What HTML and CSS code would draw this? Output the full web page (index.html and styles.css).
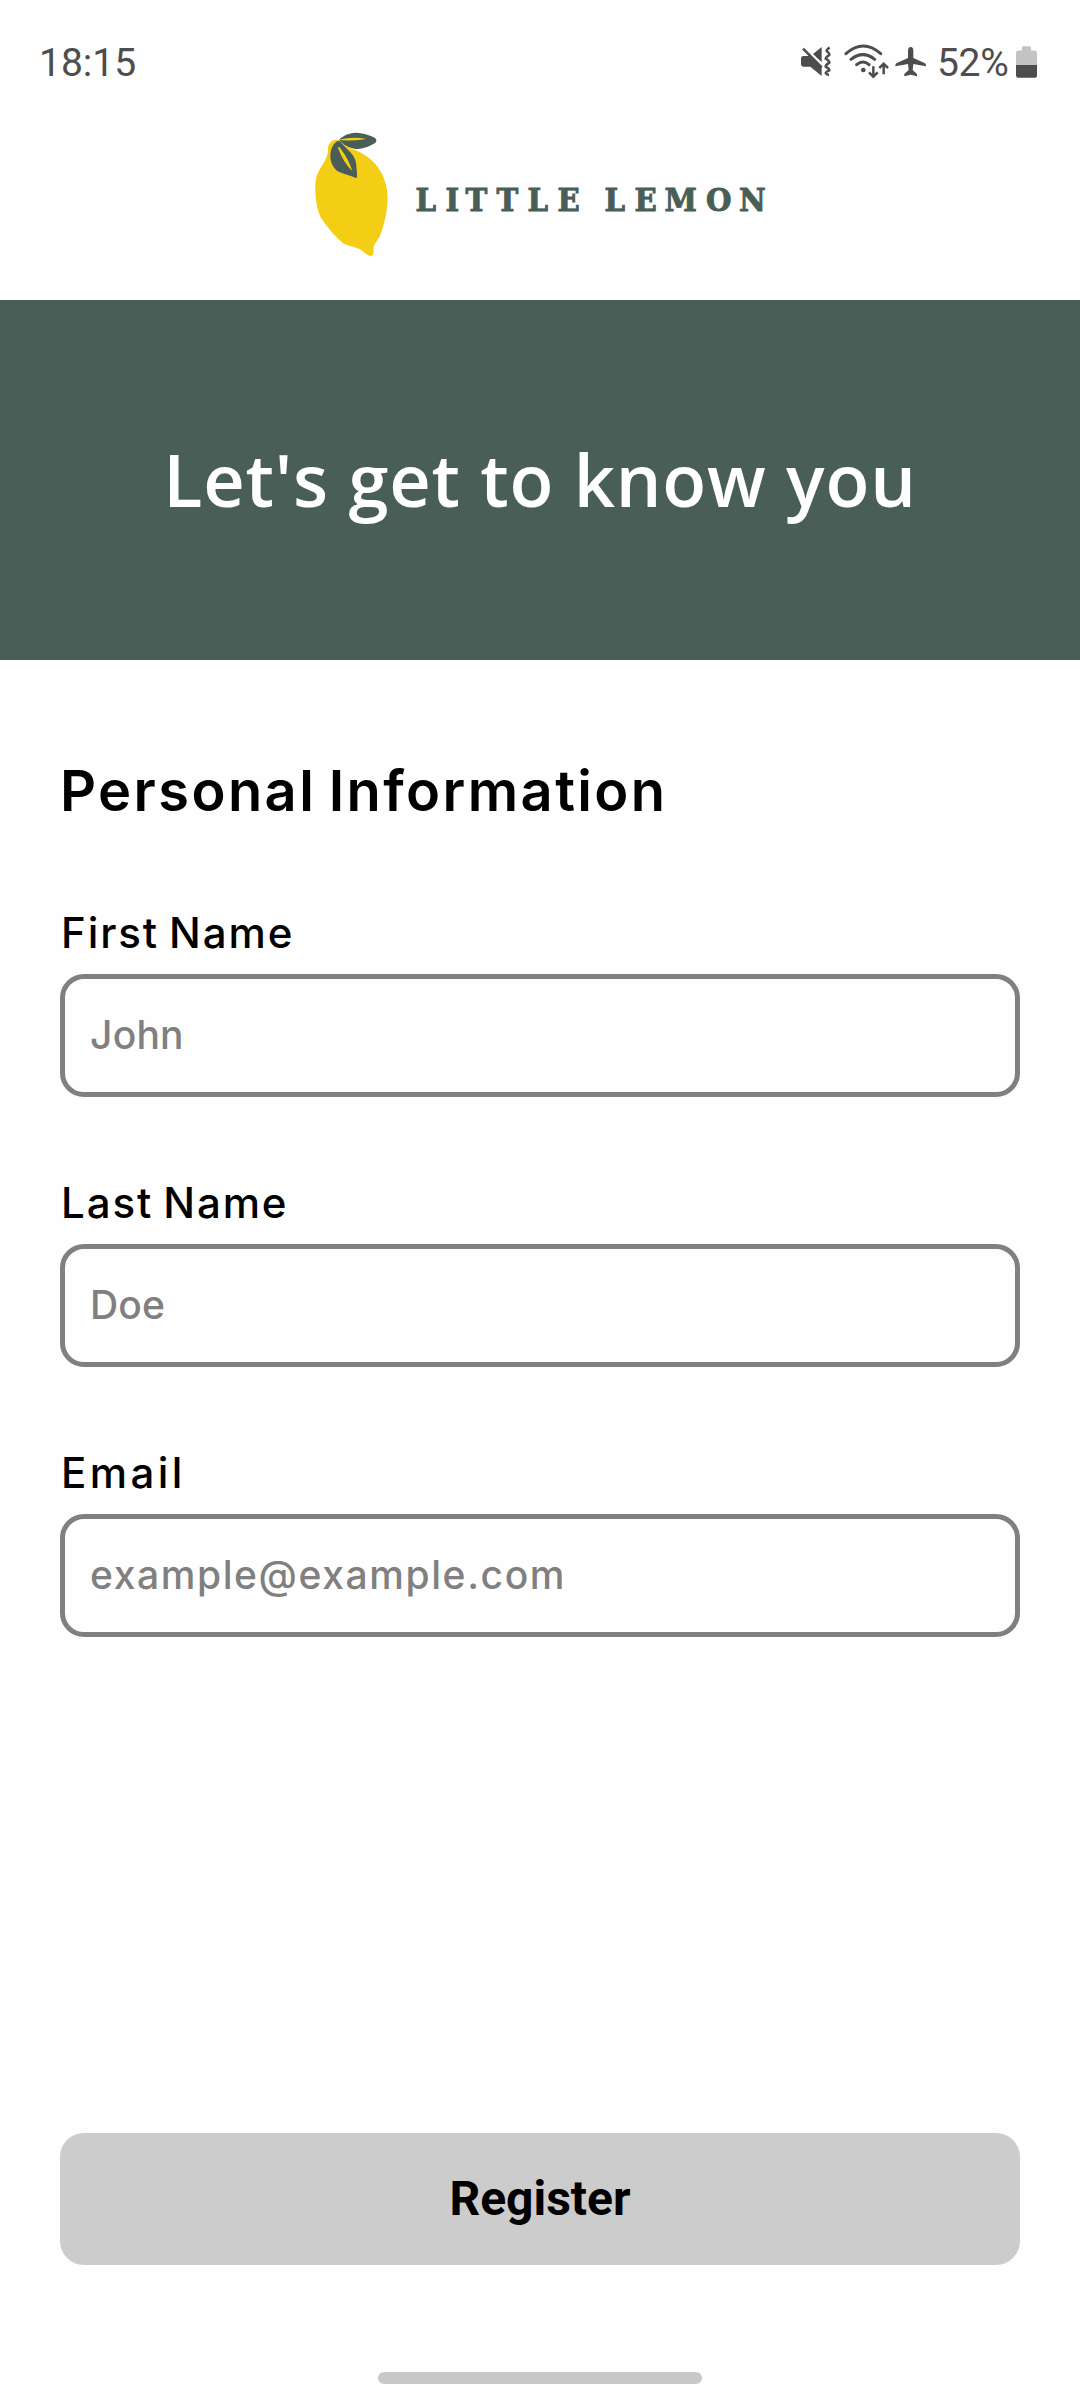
FILE: index.html
```html
<!DOCTYPE html>
<html lang="en">
<head>
<meta charset="utf-8">
<title>Little Lemon</title>
<link rel="stylesheet" href="styles.css">
</head>
<body>
<div class="screen">
  <div class="status">
    <span class="time">18:15</span>
    <div class="indicators">
      <svg class="system-icons" viewBox="60 40 384 108" fill="none" stroke="#4d4d4d">
        <g fill="#4d4d4d" stroke="none">
          <path d="M63 86q0-7 7-7h19l36 33v27l-34-28H70q-7 0-7-7z"/>
          <path d="M99 73l26-21v46z"/>
          <path d="M384 64q0-12 8-12t8 12v21l35 16q3 2 3 9l-38-7-2 18 13 12v7l-19-5-19 5v-7l13-12-2-18-38 7q0-7 3-9l35-16z"/>
          <circle cx="250" cy="121" r="7"/>
        </g>
        <path stroke-width="8" d="M69 57l56 56"/>
        <path stroke-width="7.5" d="M149 54q-10 6-9 10 9 7 8 12-11 7-11 11 11 6 11 12-11 7-11 12 11 6 11 11-11 5-11 8 2 5 10 6"/>
        <path stroke-width="9" stroke-linecap="round" d="M198 72Q250 26 302 72M213 89q36-28 71 0M230 105q19-16 37 0"/>
        <g stroke-width="7.5"><path d="M280 110v32M267 128l13 13 13-13M311 134v-32M298 115l13-13 13 13"/></g>
      </svg>
      <span class="percent">52%</span>
      <svg class="battery" viewBox="0 0 64 96">
        <path fill="#c3c3c3" d="M18 5q0-5 5-5h18q5 0 5 5v8h10q8 0 8 8v36H0V21q0-8 8-8h10z"/>
        <path fill="#4d4d4d" d="M0 57h64v31q0 8-8 8H8q-8 0-8-8z"/>
      </svg>
    </div>
  </div>
  <div class="brand">
    <svg class="logo" viewBox="0 0 480 160">
      <g transform="scale(.333333)">
        <path fill="#f4ce14" d="M150 91C132 85 116 96 114 114 116 140 101 157 90 177 78 196 75 215 76 240 77 276 82 300 92 321 108 348 132 376 161 401 177 409 195 409 210 418 222 425 232 438 243 438 250 437 251 429 250 417 251 402 266 390 274 367 284 335 291 310 293 268 292 221 281 194 258 164 236 141 214 126 182 115z"/>
        <g fill="#495e57">
          <path d="M147 89C162 75 179 69 197 68 225 70 243 77 254 83 261 88 261 95 254 100 241 109 222 115 205 117 180 117 160 104 147 89z"/>
          <path d="M142 93C126 104 121 121 121 140 122 161 132 177 146 185 163 193 183 196 200 205 203 190 199 181 199 165 198 135 171 120 150 94z"/>
        </g>
        <g fill="#f4ce14"><path d="M146 89Q190 79 229 87 190 93 154 91z"/><path d="M143 111Q150 109 155 121 175 147 187 183 161 160 143 111z"/></g>
      </g>
      <text class="wordmark" y="100.5" x="125.5 155.5 175.5 206.5 237.5 267.5 298 314.5 344.5 374.5 416 449">LITTLE LEMON</text>
    </svg>
  </div>
  <header class="hero"><h1>Let's get to know you</h1></header>
  <form class="form">
    <h2>Personal Information</h2>
    <label class="field"><span>First Name</span><input placeholder="John"></label>
    <label class="field"><span>Last Name</span><input placeholder="Doe"></label>
    <label class="field"><span class="wide">Email</span><input class="email" placeholder="example@example.com"></label>
    <button type="button">Register</button>
  </form>
  <div class="home-area"><div class="home-bar"></div></div>
</div>
</body>
</html>
```
FILE: styles.css
```css
* { box-sizing: border-box; }
body { margin: 0; background: #fefefe; font-family: Inter, sans-serif; color: #000; }
.screen { width: 1080px; height: 2400px; display: flex; flex-direction: column; overflow: hidden; }
.status { height: 110px; padding: 15px 43px 0 39px; display: flex; justify-content: space-between; align-items: flex-start; font: 400 39px/96px Roboto, sans-serif; color: #4d4d4d; }
.indicators { display: flex; }
.system-icons { width: 128px; height: 36px; margin: 28px 9px 0 0; }
.percent { width: 79px; letter-spacing: -.3px; }
.battery { width: 21px; height: 32px; margin-top: 31px; }
.brand { height: 190px; padding-left: 290px; }
.logo { display: block; width: 480px; height: 160px; }
.wordmark { font: bold 32.5px "DejaVu Serif Condensed", "DejaVu Serif", serif; font-stretch: condensed; fill: #495e57; stroke: #495e57; stroke-width: .9px; }
.hero { height: 360px; background: #495e57; display: flex; align-items: center; justify-content: center; }
h1 { margin: 0; padding-bottom: 2px; color: #fff; font: 600 72px/90px "Open Sans", sans-serif; letter-spacing: .8px; white-space: nowrap; }
.form { height: 1605px; padding: 100px 60px 0; display: flex; flex-direction: column; }
h2 { margin: 0; height: 148px; font-size: 56px; font-weight: 600; line-height: 63px; letter-spacing: 2.4px; word-spacing: -4px; white-space: nowrap; }
.field { display: flex; flex-direction: column; height: 270px; }
.field span { height: 66px; padding-left: 1px; line-height: 49px; font-size: 42px; font-weight: 500; letter-spacing: 1.9px; word-spacing: -3px; }
.field .wide { letter-spacing: 3.4px; }
input { width: 100%; height: 123px; padding: 0 25px 2px; border: 5px solid #808080; border-radius: 24px; background: transparent; outline: none; font: 500 39px/48px Inter, sans-serif; letter-spacing: .2px; }
.email { letter-spacing: 1.6px; }
input::placeholder { color: #808080; opacity: 1; }
button { margin-top: auto; height: 132px; border: 0; border-radius: 24px; background: #ccc; color: #000; font: 700 48px/60px Roboto, sans-serif; }
.home-area { height: 135px; display: flex; justify-content: center; padding-top: 107px; }
.home-bar { width: 324px; height: 12px; border-radius: 6px; background: #c8c8c8; }
```
